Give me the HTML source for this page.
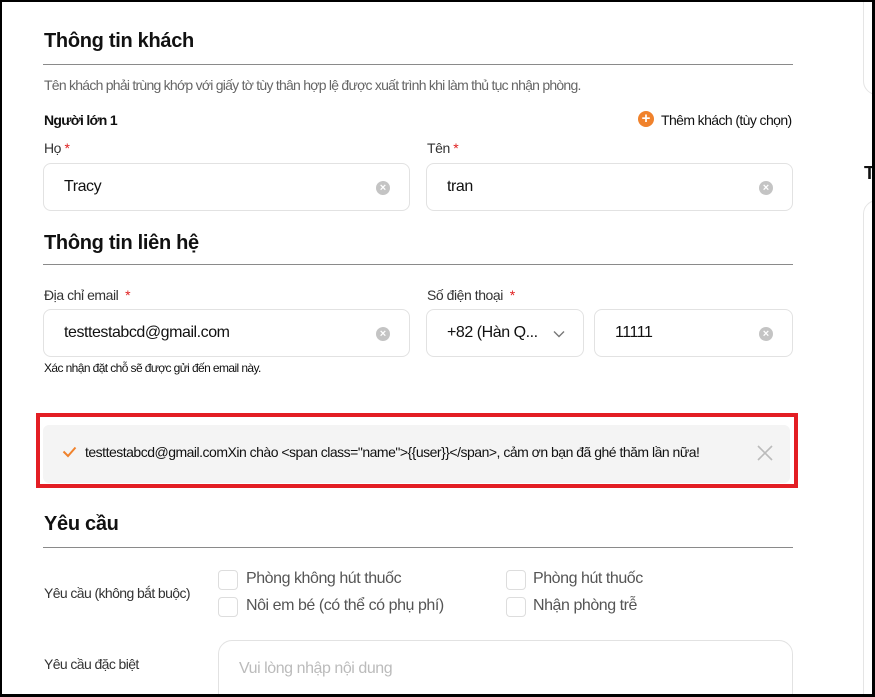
<!DOCTYPE html>
<html><head><meta charset="utf-8"><style>
*{margin:0;padding:0;box-sizing:border-box}
html,body{width:875px;height:697px;overflow:hidden}
body{background:#fff;font-family:"Liberation Sans",Arial,sans-serif;color:#111;position:relative;letter-spacing:-0.45px}
.a{position:absolute;white-space:nowrap}
.h{font-size:20px;font-weight:bold;letter-spacing:-0.3px}
.line{position:absolute;left:43px;width:750px;height:1px;background:#8a8a8a}
.lbl{font-size:14px;color:#333}
.req{color:#e02020}
.inp{position:absolute;height:48px;border:1px solid #e2e2e2;border-radius:8px;background:#fff;font-size:16px;padding:14px 0 0 20px}
.clr{position:absolute;right:19px;top:17px;width:14px;height:14px;border-radius:50%;background:#c4c4c4;color:#fff;font-size:11px;line-height:14px;text-align:center;font-weight:bold;letter-spacing:0}
.cb{position:absolute;width:20px;height:20px;border:1px solid #ddd;border-radius:4px}
.ct{font-size:16px;color:#555}
.bd{position:absolute;background:#000;z-index:5}
</style></head><body>
<div class="bd" style="left:0;top:0;width:875px;height:2px"></div>
<div class="bd" style="left:0;top:0;width:2px;height:697px"></div>
<div class="bd" style="left:0;top:694px;width:875px;height:3px"></div>
<div class="bd" style="left:872px;top:0;width:3px;height:697px"></div>
<div style="position:absolute;left:863px;top:-20px;width:30px;height:115px;border:1px solid #e5e5e5;border-radius:14px"></div>
<div style="position:absolute;left:863px;top:200px;width:30px;height:520px;border:1px solid #e5e5e5;border-radius:14px"></div>
<div class="a" style="left:864px;top:163px;font-size:18px;font-weight:bold">T</div>

<div class="a h" style="left:44px;top:30px">Thông tin khách</div>
<div class="line" style="top:64px"></div>
<div class="a" style="left:44px;top:77px;font-size:14px;color:#666;letter-spacing:-0.75px">Tên khách phải trùng khớp với giấy tờ tùy thân hợp lệ được xuất trình khi làm thủ tục nhận phòng.</div>
<div class="a" style="left:44px;top:112px;font-size:14px;font-weight:bold;letter-spacing:-0.7px">Người lớn 1</div>
<div class="a" style="left:638px;top:111px;width:16px;height:16px;border-radius:50%;background:#f0822c;color:#fff;font-size:15px;line-height:16px;text-align:center;font-weight:bold;letter-spacing:0">+</div>
<div class="a" style="left:661px;top:112px;font-size:14px;letter-spacing:-0.6px">Thêm khách (tùy chọn)</div>
<div class="a lbl" style="left:44px;top:140px">Họ <span class="req">*</span></div>
<div class="a lbl" style="left:427px;top:140px">Tên <span class="req">*</span></div>
<div class="inp" style="left:43px;top:163px;width:367px">Tracy<div class="clr">×</div></div>
<div class="inp" style="left:426px;top:163px;width:367px">tran<div class="clr">×</div></div>

<div class="a h" style="left:44px;top:232px">Thông tin liên hệ</div>
<div class="line" style="top:264px"></div>
<div class="a lbl" style="left:44px;top:287px">Địa chỉ email &nbsp;<span class="req">*</span></div>
<div class="a lbl" style="left:427px;top:287px">Số điện thoại &nbsp;<span class="req">*</span></div>
<div class="inp" style="left:43px;top:309px;width:367px">testtestabcd@gmail.com<div class="clr">×</div></div>
<div class="inp" style="left:426px;top:309px;width:158px">+82 (Hàn Q...<svg style="position:absolute;right:18px;top:20px" width="12" height="8" viewBox="0 0 12 8"><path d="M1 1.5L6 6.5L11 1.5" fill="none" stroke="#777" stroke-width="1.4"/></svg></div>
<div class="inp" style="left:594px;top:309px;width:199px">11111<div class="clr">×</div></div>
<div class="a" style="left:44px;top:361px;font-size:12px;letter-spacing:-0.6px">Xác nhận đặt chỗ sẽ được gửi đến email này.</div>

<div style="position:absolute;left:36px;top:413px;width:762px;height:75px;border:4px solid #e31e24"></div>
<div style="position:absolute;left:43px;top:425px;width:747px;height:58px;background:#f4f4f4;border-radius:6px"></div>
<svg class="a" style="left:62px;top:446px" width="15" height="12" viewBox="0 0 15 12"><path d="M1.5 5.5L6 10L13.5 1.5" fill="none" stroke="#f0822c" stroke-width="2"/></svg>
<div class="a" style="left:85px;top:444px;font-size:14px;letter-spacing:-0.5px">testtestabcd@gmail.comXin chào &lt;span class="name"&gt;{{user}}&lt;/span&gt;, cảm ơn bạn đã ghé thăm lần nữa!</div>
<svg class="a" style="left:757px;top:445px" width="16" height="16" viewBox="0 0 16 16"><path d="M1 1L15 15M15 1L1 15" stroke="#bbb" stroke-width="1.6"/></svg>

<div class="a h" style="left:44px;top:513px">Yêu cầu</div>
<div class="line" style="top:547px"></div>
<div class="a" style="left:44px;top:585px;font-size:14px;color:#333;letter-spacing:-0.6px">Yêu cầu (không bắt buộc)</div>
<div class="cb" style="left:218px;top:570px"></div><div class="a ct" style="left:246px;top:570px">Phòng không hút thuốc</div>
<div class="cb" style="left:506px;top:570px"></div><div class="a ct" style="left:533px;top:570px">Phòng hút thuốc</div>
<div class="cb" style="left:218px;top:597px"></div><div class="a ct" style="left:246px;top:597px">Nôi em bé (có thể có phụ phí)</div>
<div class="cb" style="left:506px;top:597px"></div><div class="a ct" style="left:533px;top:597px">Nhận phòng trễ</div>
<div class="a" style="left:44px;top:656px;font-size:14px;color:#333;letter-spacing:-0.6px">Yêu cầu đặc biệt</div>
<div style="position:absolute;left:218px;top:640px;width:575px;height:80px;border:1px solid #e2e2e2;border-radius:14px"></div>
<div class="a" style="left:239px;top:660px;font-size:16px;color:#bbb">Vui lòng nhập nội dung</div>
</body></html>
